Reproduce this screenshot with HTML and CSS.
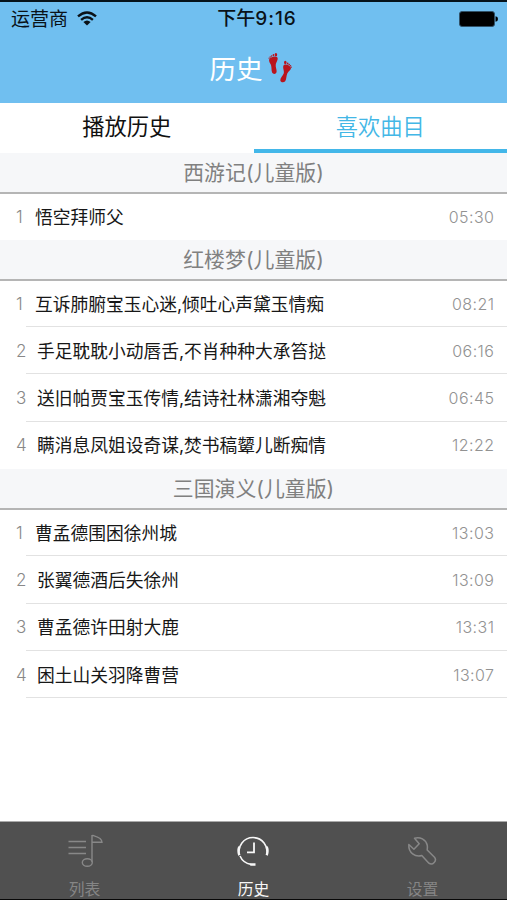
FILE: index.html
```html
<!DOCTYPE html>
<html lang="zh-CN">
<head>
<meta charset="utf-8">
<title>历史</title>
<link rel="stylesheet" href="styles.css">
</head>
<body>
<div class="app">
  <header class="top">
    <div class="status">
      <div class="carrier"><span>运营商</span>
        <svg width="20" height="15" viewBox="0 0 20 15" fill="none" stroke="#0a1218" stroke-width="2.4"><path d="M1 5.4Q10-2.4 19 5.4M4.1 8.9Q10 3.8 15.9 8.9"/><path d="M6.4 11Q10 8 13.6 11L10 14.6Z" fill="#0a1218" stroke="none"/></svg>
      </div>
      <div class="clock">下午<span>9:16</span></div>
      <div class="battery"><svg width="39" height="16" viewBox="0 0 39 16"><rect x=".5" y=".5" width="35" height="15" rx="2.5" fill="#000" stroke="#315167"/><path d="M36.5 5.2Q39 5.5 39 8T36.5 10.8Z"/></svg></div>
    </div>
    <h1 class="title"><span>历史</span>
      <svg class="feet" width="24" height="31" viewBox="0 0 24 31" fill="#b9141d"><path d="M1.2 7.2C3 4.8 7 3.7 9 5.1C10.8 7 8.6 9.7 7.8 12.2C7.2 14.7 9 17.5 8.6 20C8 22.4 5 22.5 4.1 20.5C3.2 18 3.8 15.5 3 13C2 11 .6 9.2 1.2 7.2Z"/><path d="M15.9 12.9C18.5 11.9 22 13.4 23 16C23.2 18 20.5 19.2 19.4 21.2C18.2 23.5 18.6 27 17.2 29.2C15.6 31 12.5 30.5 12.3 28.2C12.2 25.5 15 23.8 15.8 21.2C16.5 18.5 14 15 15.9 12.9Z"/><g><ellipse cx="7.9" cy="2.7" rx="1.3" ry="1.8"/><ellipse cx="5.4" cy="3.2" rx=".8" ry="1.1"/><circle cx="3.6" cy="4" r=".8"/><circle cx="2.2" cy="5" r=".7"/><circle cx="1.1" cy="6.2" r=".6"/><ellipse cx="17.3" cy="10.5" rx="1.3" ry="1.7"/><ellipse cx="19.7" cy="11.5" rx=".8" ry="1.1"/><circle cx="21.2" cy="12.6" r=".8"/><circle cx="22.5" cy="13.8" r=".7"/><circle cx="23.3" cy="15.2" r=".6"/></g></svg>
    </h1>
  </header>
  <nav class="tabs"><div class="tab">播放历史</div><div class="tab active">喜欢曲目</div></nav>
  <main>
    <section>
      <h2>西游记(儿童版)</h2>
      <ol><li class="first"><i>1</i><b>悟空拜师父</b><time>05:30</time></li></ol>
    </section>
    <section>
      <h2>红楼梦(儿童版)</h2>
      <ol>
        <li class="first"><i>1</i><b>互诉肺腑宝玉心迷,倾吐心声黛玉情痴</b><time>08:21</time></li>
        <li><i>2</i><b>手足耽耽小动唇舌,不肖种种大承笞挞</b><time>06:16</time></li>
        <li><i>3</i><b>送旧帕贾宝玉传情,结诗社林潇湘夺魁</b><time>06:45</time></li>
        <li><i>4</i><b>瞒消息凤姐设奇谋,焚书稿颦儿断痴情</b><time>12:22</time></li>
      </ol>
    </section>
    <section class="open">
      <h2>三国演义(儿童版)</h2>
      <ol>
        <li class="first"><i>1</i><b>曹孟德围困徐州城</b><time>13:03</time></li>
        <li><i>2</i><b>张翼德酒后失徐州</b><time>13:09</time></li>
        <li><i>3</i><b>曹孟德许田射大鹿</b><time>13:31</time></li>
        <li><i>4</i><b>困土山关羽降曹营</b><time>13:07</time></li>
      </ol>
    </section>
  </main>
  <footer>
    <div class="item"><svg width="36" height="36" viewBox="0 0 36 36" fill="none" stroke="#888" stroke-width="1.4"><path d="M1.5 8.5H19M1.5 14.5H19M1.5 20.5H19M25 29V2C25 2.6 35 3.5 35 9.3H25"/><ellipse cx="20.3" cy="29.5" rx="5" ry="3.8"/></svg><span>列表</span></div>
    <div class="item on"><svg width="36" height="36" viewBox="0 0 36 36" fill="none" stroke="#f7f7f7" stroke-width="1.6"><path d="M3.3 22A14.1 14.1 0 1 1 30.7 22"/><path d="M3.3 13.8Q1.7 18 3.3 22.2M30.7 13.8Q32.3 18 30.7 22.2" stroke-width="2.4"/><path d="M4 23Q7 30 15 31.4"/><path d="M14.3 31.5H19.5" stroke-width="2.5"/><path d="M18 9.5V19.3H11" stroke-width="1.8"/></svg><span>历史</span></div>
    <div class="item"><svg width="36" height="36" viewBox="0 0 36 36" fill="none" stroke="#888" stroke-width="1.5" stroke-linejoin="round"><path d="M9.5 5.2C15 3.5 20.8 6.4 22.2 12C22.7 14 22.3 15.5 22.2 17L29.5 24.2C32.3 27.5 27.7 33 23.9 30.2L16.8 22.5C10.3 24.4 3.3 20 3.8 11.5L8.9 16.2L14.2 10.7Z"/></svg><span class="small">设置</span></div>
  </footer>
</div>
</body>
</html>
```
FILE: styles.css
```css
* { box-sizing: border-box; margin: 0; padding: 0; }
body { font-family: Inter, "Noto Sans CJK SC", sans-serif; background: #fff; }
svg { display: block; flex: none; }
.app { height: 900px; display: flex; flex-direction: column; overflow: hidden; border-bottom: 1px solid #080808; }
.top { height: 103px; background: #70bff0; border-top: 2px solid #06131b; color: #0a1218; }
.status { height: 32px; display: grid; grid-template-columns: 1fr auto 1fr; align-items: center; font-size: 19px; line-height: 32px; padding: 0 9px 0 11px; }
.carrier { display: flex; align-items: center; gap: 9px; }
.carrier span { padding-top: 2px; }
.carrier svg { margin-bottom: 1px; }
.clock { font-size: 19px; font-weight: 500; padding-left: 5px; }
.clock span { letter-spacing: 1px; }
.battery { display: flex; justify-content: flex-end; }
.battery svg { margin-bottom: 1px; }
.title { height: 69px; display: flex; align-items: center; justify-content: center; gap: 5px; padding-right: 6px; font-size: 26.6px; font-weight: 400; line-height: 66px; color: #fff; }
.feet { margin-bottom: 2px; }
.tabs { height: 50px; display: flex; font-size: 22.3px; line-height: 47px; text-align: center; }
.tab { flex: 1; border-bottom: 4px solid transparent; color: #111; }
.tab.active { color: #43b7e6; border-color: #43b7e9; font-weight: 350; }
main { flex: 1; }
h2 { height: 41px; background: #f6f7f9; font-size: 20.9px; font-weight: 400; line-height: 40px; color: #808080; text-align: center; border-bottom: 2px solid #b5b5b5; }
ol { list-style: none; }
li { height: 47.4px; display: flex; align-items: center; padding: 0 13px 0 16px; position: relative; }
li.first { height: 46px; }
li:not(:last-child)::after, .open li::after { content: ""; position: absolute; left: 26px; right: 0; bottom: 0; height: 1px; background: #e2e2e2; }
i { width: 21px; font-style: normal; font-size: 17px; font-weight: 300; color: #888; }
.first i { width: 19px; }
b { flex: 1; font-size: 17.75px; font-weight: 400; color: #171717; white-space: nowrap; padding-bottom: 2px; }
time { font-size: 16px; font-weight: 350; color: #929292; letter-spacing: .45px; margin-right: -.45px; }
footer { height: 78px; background: #505050; border-top: 1px solid #aaa; display: flex; }
.item { flex: 1; display: flex; flex-direction: column; align-items: center; color: #858585; padding-top: 11px; }
.item span { font-size: 15.8px; line-height: 22px; margin-top: 10px; }
.item.on { color: #f7f7f7; }
```
